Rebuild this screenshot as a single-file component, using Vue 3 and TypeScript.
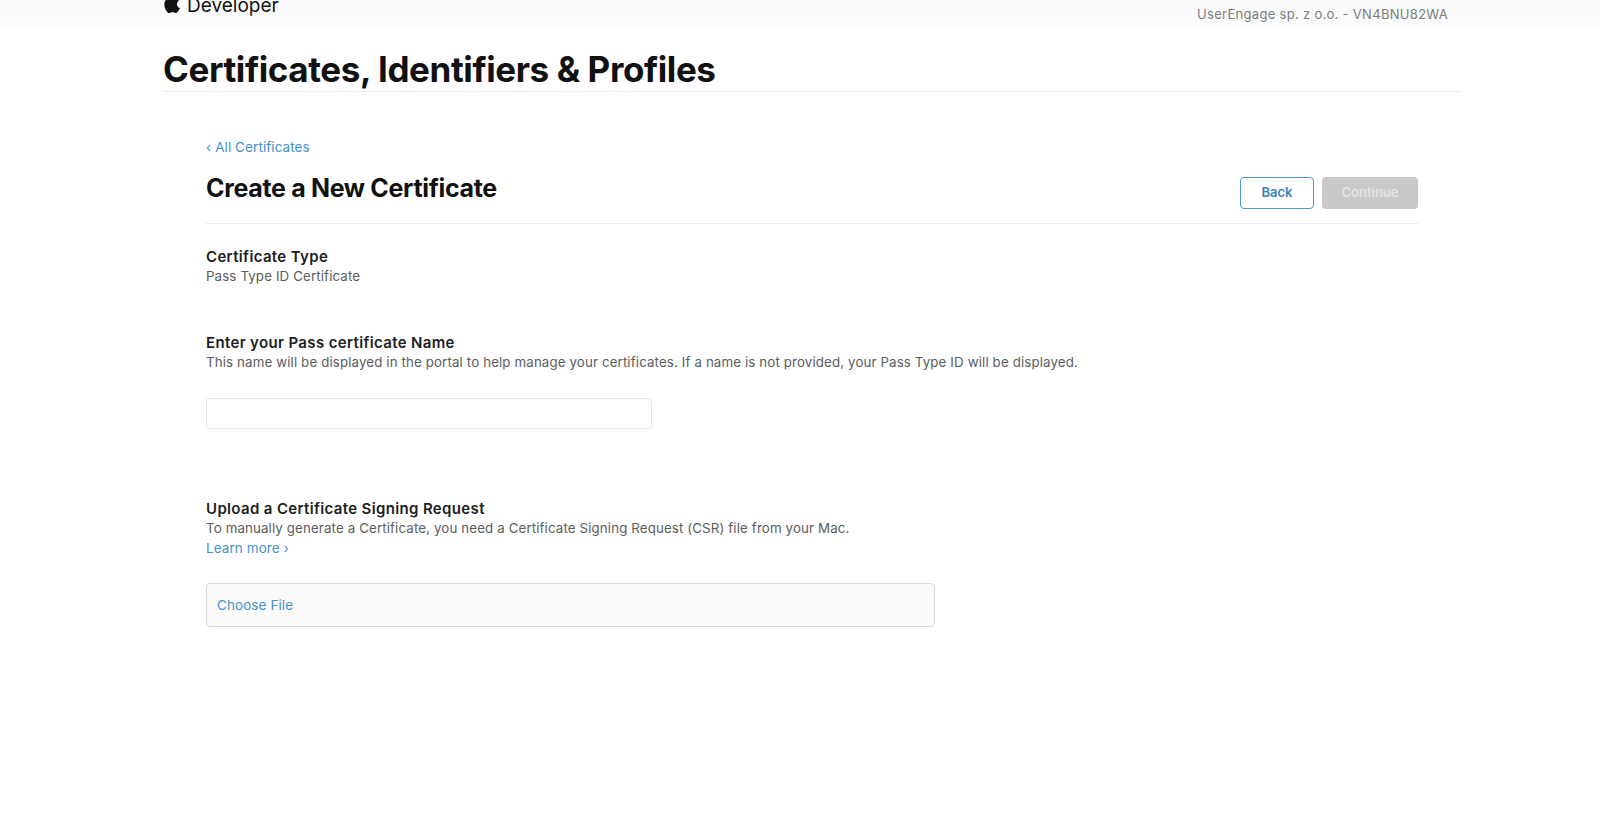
<script setup lang="ts">
const brand: string = 'Developer'
</script>

<template>
  <div class="page">
    <header class="top">
      <div class="brand">
        <svg class="apple" viewBox="0 0 17 20" width="18" height="21" aria-hidden="true">
          <path d="M14.1 10.6c0-2.2 1.8-3.2 1.9-3.3-1-1.5-2.6-1.7-3.2-1.7-1.4-.1-2.6.8-3.3.8s-1.8-.8-2.9-.8C5 5.6 3.6 6.5 2.9 7.800c-1.600 2.700-.4 6.800 1.100 9 .8 1.100 1.700 2.300 2.900 2.300 1.200-.1 1.600-.7 3-.7s1.800.7 3 .7 2-1.100 2.800-2.200c.9-1.300 1.200-2.500 1.300-2.600-.1 0-2.800-1-2.900-3.700zM11.800 3.900c.6-.8 1.100-1.800.9-2.900-.9 0-2 .6-2.600 1.300-.6.6-1.100 1.700-1 2.700 1 .1 2-.4 2.700-1.100z" fill="#111"/>
        </svg>
        <span>{{ brand }}</span>
      </div>
      <div class="team">UserEngage sp. z o.o. - VN4BNU82WA</div>
    </header>

    <main class="wrap">
      <h1 class="title">Certificates, Identifiers &amp; Profiles</h1>
      <section class="panel">
        <a class="link back-link">‹ All Certificates</a>
        <div class="head">
          <h2>Create a New Certificate</h2>
          <div class="actions">
            <button class="btn outline">Back</button>
            <button class="btn disabled">Continue</button>
          </div>
        </div>

        <div class="block type">
          <h3>Certificate Type</h3>
          <p>Pass Type ID Certificate</p>
        </div>

        <div class="block name">
          <h3>Enter your Pass certificate Name</h3>
          <p>This name will be displayed in the portal to help manage your certificates. If a name is not provided, your Pass Type ID will be displayed.</p>
          <input class="field" type="text" aria-label="Pass certificate name" />
        </div>

        <div class="block upload">
          <h3>Upload a Certificate Signing Request</h3>
          <p>To manually generate a Certificate, you need a Certificate Signing Request (CSR) file from your Mac.</p>
          <a class="link">Learn more ›</a>
          <div class="file"><span class="link">Choose File</span></div>
        </div>
      </section>
    </main>
  </div>
</template>

<style>
html, body { margin: 0; background: #fff; }
</style>

<style scoped>
.page {
  height: 814px;
  overflow: hidden;
  background: #fff;
  font-family: Inter, "Liberation Sans", sans-serif;
  color: #1d1d1f;
}
.top {
  height: 30px;
  box-sizing: border-box;
  padding: 0 152px 0 163px;
  background: linear-gradient(#fafafa 0 22px, #fefefe 30px);
  display: flex;
  justify-content: space-between;
  overflow: hidden;
}
.brand {
  display: flex;
  align-items: center;
  gap: 6px;
  height: 16px;
  margin-top: -3px;
  font-size: 19px;
  color: #111;
}
.apple { margin: -4px 1px 0 -1px; }
.team {
  margin-top: 5px;
  font-size: 13px;
  line-height: 18px;
  letter-spacing: 0.3px;
  color: #7c7c7e;
}
.wrap {
  width: 1297px;
  margin-left: 163px;
}
.title {
  margin: 0;
  height: 62px;
  box-sizing: border-box;
  padding-top: 18px;
  border-bottom: 1px solid #ececec;
  font-size: 35px;
  line-height: 42px;
  font-weight: 700;
  letter-spacing: -0.41px;
  color: #111;
}
.panel {
  width: 1212px;
  margin-left: 43px;
  padding-top: 46px;
}
.link {
  display: block;
  font-size: 13.5px;
  line-height: 18.5px;
  letter-spacing: 0.08px;
  color: #4592cc;
}
.head {
  margin-top: 14.5px;
  height: 53px;
  box-sizing: border-box;
  border-bottom: 1px solid #ececec;
  display: flex;
  justify-content: space-between;
  align-items: flex-start;
}
h2 {
  margin: 0;
  font-size: 25px;
  line-height: 34px;
  font-weight: 700;
  letter-spacing: -0.33px;
  color: #111;
}
.actions {
  display: flex;
  gap: 8px;
  margin-top: 6px;
}
.btn {
  height: 32px;
  box-sizing: border-box;
  border-radius: 4px;
  font-family: inherit;
  font-size: 13px;
  line-height: 28px;
  font-weight: 600;
  padding: 0 0 2px;
}
.outline {
  width: 74px;
  background: #fff;
  border: 1.5px solid #4b9ad0;
  color: #3c81bd;
}
.disabled {
  width: 96px;
  background: #c9c9c9;
  border: 0;
  color: #e3e3e3;
}
.block h3 {
  margin: 0;
  font-size: 15px;
  line-height: 20px;
  font-weight: 600;
  letter-spacing: 0.35px;
  color: #1d1d1f;
}
.block p {
  margin: 0;
  font-size: 13.3px;
  line-height: 19.5px;
  letter-spacing: 0.13px;
  color: #5c5c5e;
}
.type { margin-top: 23px; }
.name { margin-top: 46px; }
.field {
  display: block;
  width: 446px;
  height: 31px;
  box-sizing: border-box;
  margin-top: 26px;
  border: 1px solid #e8e8e8;
  border-radius: 3px;
  background: #fff;
  padding: 0 10px;
}
.upload { margin-top: 70px; }
.file {
  width: 729px;
  height: 44px;
  box-sizing: border-box;
  margin-top: 26px;
  padding: 0 10px;
  border: 1px solid #d9d9d9;
  border-radius: 4px;
  background: #fafafa;
  display: flex;
  align-items: center;
}
</style>
